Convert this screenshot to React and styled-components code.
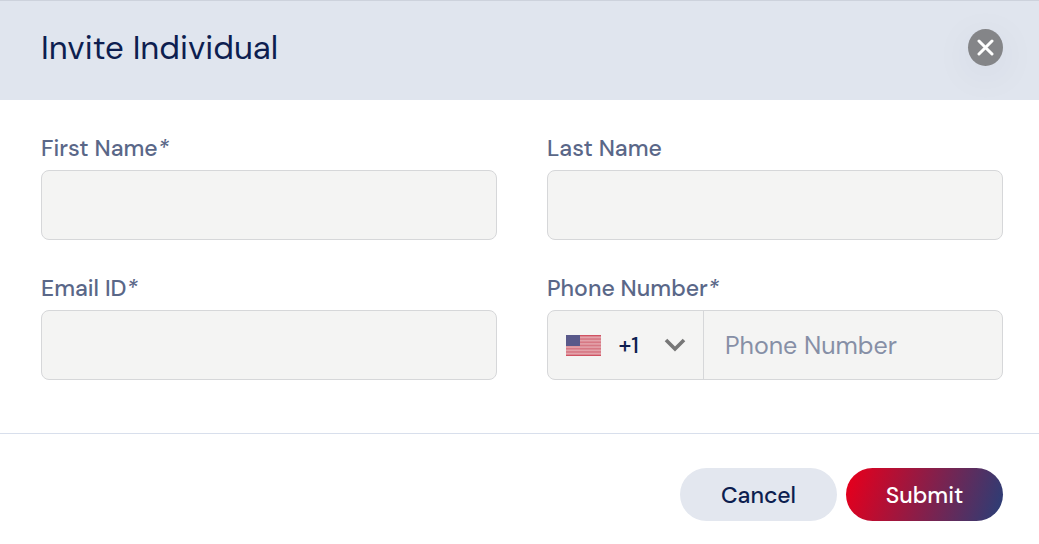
import React from 'react'
import styled, { createGlobalStyle, ThemeProvider } from 'styled-components'

const theme = {
  color: {
    primary: '#0d1e50',
    label: '#5a6788',
    placeholder: '#868fa6',
    header: '#e0e5ee',
    headerEdge: '#cdd2dc',
    field: '#f4f4f3',
    fieldBorder: '#d6d7d9',
    divider: '#d8dfec',
    secondary: '#e3e7ef',
    close: '#848588',
    chevron: '#777777',
  },
}

const GlobalStyle = createGlobalStyle`
  * {
    box-sizing: border-box;
  }

  body {
    margin: 0;
    background-color: #ffffff;
    font-family: 'DM Sans', Inter, 'Liberation Sans', sans-serif;
  }

  button,
  input,
  select {
    font-family: inherit;
  }
`

const Header = styled.header`
  display: flex;
  align-items: flex-start;
  justify-content: space-between;
  height: 100px;
  padding: 28px 36px 0 41px;
  border-top: 1px solid ${({ theme }) => theme.color.headerEdge};
  background-color: ${({ theme }) => theme.color.header};
`

const Title = styled.h1`
  margin: 0;
  font-size: 33px;
  font-weight: 400;
  line-height: 38px;
  color: ${({ theme }) => theme.color.primary};
`

const CloseButton = styled.button`
  display: flex;
  align-items: center;
  justify-content: center;
  width: 35px;
  height: 37px;
  padding: 0;
  border: 0;
  border-radius: 50%;
  background-color: ${({ theme }) => theme.color.close};
  box-shadow: 0 8px 40px rgba(13, 30, 80, 0.07);
  cursor: pointer;
`

const Fields = styled.div`
  display: grid;
  grid-template-columns: 1fr 1fr;
  gap: 34px 50px;
  padding: 34px 36px 53px 41px;
`

const Field = styled.div`
  display: flex;
  flex-direction: column;
  gap: 8px;
  min-width: 0;
`

const Label = styled.label`
  font-size: 23px;
  font-weight: 500;
  line-height: 28px;
  color: ${({ theme }) => theme.color.label};
`

const Input = styled.input`
  width: 100%;
  height: 70px;
  padding: 0 20px;
  border: 1px solid ${({ theme }) => theme.color.fieldBorder};
  border-radius: 8px;
  background-color: ${({ theme }) => theme.color.field};
  font-size: 25px;
  color: ${({ theme }) => theme.color.primary};
`

const PhoneGroup = styled.div`
  display: flex;
  height: 70px;
  border: 1px solid ${({ theme }) => theme.color.fieldBorder};
  border-radius: 8px;
  background-color: ${({ theme }) => theme.color.field};
  overflow: hidden;
`

const DialCode = styled.div`
  display: flex;
  flex: none;
  align-items: center;
  justify-content: space-between;
  width: 156px;
  padding: 0 17px 0 18px;
  border-right: 1px solid ${({ theme }) => theme.color.fieldBorder};
`

const DialSelect = styled.select`
  width: 28px;
  padding: 0;
  border: 0;
  background: transparent;
  appearance: none;
  font-size: 23px;
  line-height: 28px;
  font-weight: 500;
  color: ${({ theme }) => theme.color.primary};
`

const PhoneInput = styled.input`
  flex: 1;
  min-width: 0;
  padding: 0 21px;
  border: 0;
  background: transparent;
  font-size: 25px;
  color: ${({ theme }) => theme.color.primary};

  &::placeholder {
    color: ${({ theme }) => theme.color.placeholder};
    opacity: 1;
  }
`

const Footer = styled.footer`
  display: flex;
  justify-content: flex-end;
  gap: 9px;
  padding: 34px 36px 23px;
  border-top: 1px solid ${({ theme }) => theme.color.divider};
`

const Button = styled.button`
  width: 157px;
  height: 53px;
  padding: 0;
  border: 0;
  border-radius: 27px;
  background: ${({ $primary, theme }) => ($primary
    ? 'linear-gradient(108deg, #e2001e 5%, #273f78 100%)'
    : theme.color.secondary)};
  font-size: 23px;
  font-weight: 500;
  line-height: 28px;
  color: ${({ $primary, theme }) => ($primary ? '#ffffff' : theme.color.primary)};
  cursor: pointer;
`

const CloseIcon = () => (
  <svg width="17" height="17" viewBox="0 0 17 17" aria-hidden="true">
    <path d="M2 2l13 13M15 2L2 15" stroke="#ffffff" strokeWidth="3" strokeLinecap="round" />
  </svg>
)

const ChevronIcon = () => (
  <svg width="22" height="14" viewBox="0 0 22 14" aria-hidden="true">
    <path d="M2 2l9 9 9-9" fill="none" stroke={theme.color.chevron} strokeWidth="3.6" />
  </svg>
)

const STRIPES = [0, 1, 2, 3, 4, 5, 6]

const FlagIcon = () => (
  <svg width="35" height="21" viewBox="0 0 35 21" role="img" aria-label="United States">
    <rect width="35" height="21" fill="#e3a2aa" />
    {STRIPES.map((i) => (
      <rect key={i} y={i * 3.23} width="35" height="1.62" fill="#d77884" />
    ))}
    <path d="M0 .5h35M0 20.5h35" stroke="#d05262" />
    <rect width="14" height="11" fill="#59598a" />
  </svg>
)

const TextField = ({ id, label, required, type = 'text' }) => (
  <Field>
    <Label htmlFor={id}>
      {label}
      {required && <em>*</em>}
    </Label>
    <Input id={id} type={type} required={required} />
  </Field>
)

const App = () => (
  <ThemeProvider theme={theme}>
    <GlobalStyle />
    <Header>
      <Title>Invite Individual</Title>
      <CloseButton type="button" aria-label="Close">
        <CloseIcon />
      </CloseButton>
    </Header>
    <form onSubmit={(event) => event.preventDefault()}>
      <Fields>
        <TextField id="first-name" label="First Name" required />
        <TextField id="last-name" label="Last Name" />
        <TextField id="email" label="Email ID" type="email" required />
        <Field>
          <Label htmlFor="phone">
            Phone Number
            <em>*</em>
          </Label>
          <PhoneGroup>
            <DialCode>
              <FlagIcon />
              <DialSelect aria-label="Country code" defaultValue="+1">
                <option value="+1">+1</option>
              </DialSelect>
              <ChevronIcon />
            </DialCode>
            <PhoneInput id="phone" type="tel" placeholder="Phone Number" required />
          </PhoneGroup>
        </Field>
      </Fields>
      <Footer>
        <Button type="button">Cancel</Button>
        <Button type="submit" $primary>Submit</Button>
      </Footer>
    </form>
  </ThemeProvider>
)

export default App
